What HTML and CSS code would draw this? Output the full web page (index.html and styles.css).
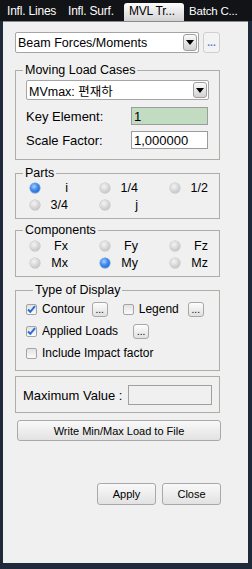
FILE: index.html
```html
<!DOCTYPE html>
<html lang="en">
<head>
  <meta charset="UTF-8" />
  <title>MVL Tracer</title>
  <link rel="stylesheet" href="styles.css">
</head>
<body>
  <div class="window">
    <!-- Tab strip -->
    <div class="tabs">
      <div class="tab lines">Infl. Lines</div>
      <div class="tab surf">Infl. Surf.</div>
      <div class="tab active">MVL Tr...</div>
      <div class="tab batch">Batch C...</div>
    </div>

    <div class="panel">
      <div class="top-row">
        <div class="combo combo-main">
          <span class="combo-text">Beam Forces/Moments</span>
          <span class="combo-btn"><svg width="8" height="5" viewBox="0 0 8 5"><path d="M0 0h8L4 5z" fill="#000"/></svg></span>
        </div>
        <button class="dots dots-blue">...</button>
      </div>

      <fieldset class="group moving">
        <legend>Moving Load Cases</legend>
        <div class="group-body">
          <div class="combo combo-case">
            <span class="combo-text">MVmax: 편재하</span>
            <span class="combo-btn"><svg width="8" height="5" viewBox="0 0 8 5"><path d="M0 0h8L4 5z" fill="#000"/></svg></span>
          </div>
          <div class="field-row">
            <label>Key Element:</label>
            <input class="edit key" type="text" value="1" />
          </div>
          <div class="field-row">
            <label>Scale Factor:</label>
            <input class="edit" type="text" value="1,000000" />
          </div>
        </div>
      </fieldset>

      <fieldset class="group parts">
        <legend>Parts</legend>
        <div class="radio-grid">
          <div class="radio-cell"><span class="radio on"></span><span class="radio-label">i</span></div>
          <div class="radio-cell"><span class="radio"></span><span class="radio-label">1/4</span></div>
          <div class="radio-cell"><span class="radio"></span><span class="radio-label">1/2</span></div>
          <div class="radio-cell"><span class="radio"></span><span class="radio-label">3/4</span></div>
          <div class="radio-cell"><span class="radio"></span><span class="radio-label">j</span></div>
        </div>
      </fieldset>

      <fieldset class="group components">
        <legend>Components</legend>
        <div class="radio-grid">
          <div class="radio-cell"><span class="radio"></span><span class="radio-label">Fx</span></div>
          <div class="radio-cell"><span class="radio"></span><span class="radio-label">Fy</span></div>
          <div class="radio-cell"><span class="radio"></span><span class="radio-label">Fz</span></div>
          <div class="radio-cell"><span class="radio"></span><span class="radio-label">Mx</span></div>
          <div class="radio-cell"><span class="radio on"></span><span class="radio-label">My</span></div>
          <div class="radio-cell"><span class="radio"></span><span class="radio-label">Mz</span></div>
        </div>
      </fieldset>

      <fieldset class="group display">
        <legend>Type of Display</legend>
        <div class="check-row">
          <span class="check on"><svg width="9" height="8" viewBox="0 0 9 8"><path d="M1 4.5l2.3 2.3L8 1.2" stroke="#2a6fd8" stroke-width="2" fill="none"/></svg></span>
          <span class="check-label contour">Contour</span>
          <button class="dots">...</button>
          <span class="check legend-check"></span>
          <span class="check-label legend-label">Legend</span>
          <button class="dots">...</button>
        </div>
        <div class="check-row">
          <span class="check on"><svg width="9" height="8" viewBox="0 0 9 8"><path d="M1 4.5l2.3 2.3L8 1.2" stroke="#2a6fd8" stroke-width="2" fill="none"/></svg></span>
          <span class="check-label applied">Applied Loads</span>
          <button class="dots">...</button>
        </div>
        <div class="check-row">
          <span class="check"></span>
          <span class="check-label">Include Impact factor</span>
        </div>
      </fieldset>

      <fieldset class="group maxval">
        <div class="max-row">
          <label>Maximum Value :</label>
          <input class="edit max-input" type="text" value="" />
        </div>
      </fieldset>

      <button class="push write">Write Min/Max Load to File</button>

      <div class="bottom-row">
        <button class="push apply">Apply</button>
        <button class="push close">Close</button>
      </div>
    </div>
  </div>
</body>
</html>
```

FILE: styles.css
```css
body {
  margin: 0;
  background: #1e2939;
  font-family: "Liberation Sans", Arial, "Noto Sans CJK KR", sans-serif;
  font-size: 12px;
  color: #000;
}

.window {
  width: 252px;
  height: 569px;
  display: flex;
  flex-direction: column;
}

/* tab strip */
.tabs {
  height: 21px;
  background: #111316;
  display: flex;
  align-items: flex-end;
  padding-left: 3px;
  color: #fff;
  font-size: 12px;
  letter-spacing: -0.2px;
  box-sizing: border-box;
}

.tab {
  flex: none;
  height: 18px;
  line-height: 17px;
  white-space: nowrap;
  box-sizing: border-box;
}

.tab.lines {
  width: 61px;
  padding-left: 4px;
}

.tab.surf {
  width: 57px;
  padding-left: 4px;
}

.tab.active {
  margin-left: 3px;
  width: 60px;
  padding-left: 5px;
  background: linear-gradient(#fefefe, #d2d2d2);
  color: #000;
  border-radius: 3px 3px 0 0;
}

.tab.batch {
  padding-left: 5px;
  font-size: 11.5px;
}

.panel {
  margin-left: 3px;
  width: 245px;
  height: 542px;
  background: #f0f0f0;
  border-top: 1px solid #8a8a8a;
  padding: 10px 0 0 12px;
  box-sizing: border-box;
}

/* combo boxes */
.top-row {
  display: flex;
  gap: 4px;
  height: 21px;
}

.combo {
  display: flex;
  align-items: center;
  justify-content: space-between;
  background: #fff;
  border: 1px solid #a5a5a5;
  border-radius: 2px;
  box-sizing: border-box;
  padding: 0 1px 0 2px;
}

.combo-main {
  width: 184px;
  height: 21px;
  font-size: 12.5px;
}

.combo-case {
  width: 183px;
  height: 20px;
  font-size: 12.5px;
}

.combo-text {
  white-space: nowrap;
}

.combo-btn {
  width: 14px;
  height: 17px;
  border: 1px solid #a0a0a0;
  border-radius: 3px;
  background: linear-gradient(#fafafa, #d2d2d2);
  display: flex;
  align-items: center;
  justify-content: center;
  box-sizing: border-box;
}

.combo-case .combo-btn {
  height: 16px;
}

.dots {
  width: 16px;
  height: 15px;
  padding: 0;
  border: 1px solid #a8a8a8;
  border-radius: 3px;
  background: linear-gradient(#fdfdfd, #e0e0e0);
  font-family: "Liberation Sans", Arial, sans-serif;
  font-size: 10px;
  line-height: 9px;
  color: #000;
}

.dots-blue {
  width: 17px;
  height: 21px;
  border-color: #cfcfcf;
  background: #f3f3f3;
  color: #5c7fd6;
  font-weight: bold;
}

/* group boxes */
.group {
  margin: 0;
  padding: 0;
  width: 205px;
  border: 1px solid #aeaea6;
  box-sizing: border-box;
  min-width: 0;
}

.group legend {
  margin-left: 7px;
  padding: 0 2px;
  line-height: 14px;
  font-size: 12.5px;
}

.moving {
  margin-top: 10px;
}

.group-body {
  padding: 3px 0 10px 10px;
}

.field-row {
  display: flex;
  align-items: center;
  margin-top: 7px;
  font-size: 13px;
}

.field-row + .field-row {
  margin-top: 6px;
}

.field-row label {
  width: 105px;
}

.edit {
  width: 77px;
  height: 18px;
  box-sizing: border-box;
  border: 1px solid #9c9c9c;
  padding: 0 2px;
  font-family: "Liberation Sans", Arial, sans-serif;
  font-size: 13px;
  background: #fff;
  outline: none;
}

.edit.key {
  background: #c2dcc2;
}

.parts {
  margin-top: 6px;
}

.components {
  margin-top: 4px;
}

.radio-grid {
  display: grid;
  grid-template-columns: 70px 70px 60px;
  grid-auto-rows: 17px;
  padding: 0 0 5px 14px;
  font-size: 12.5px;
}

.parts .radio-grid {
  margin-top: -1px;
}

.radio-cell {
  display: flex;
  align-items: center;
}

.radio {
  width: 10px;
  height: 10px;
  border-radius: 50%;
  background: radial-gradient(circle at 40% 35%, #f4f4f4 0, #d6d6d6 50%, #b4b4b4 100%);
  box-shadow: 0 0 0 0.5px #b8b8b8;
}

.radio.on {
  background: radial-gradient(circle at 40% 35%, #a8d0ff 0, #3a86ea 45%, #1d5fc8 100%);
  box-shadow: 0 0 0 0.5px #5a8ad0;
}

.radio-label {
  width: 28px;
  text-align: right;
}

/* type of display */
.display {
  margin-top: 6px;
  padding: 1px 0 6px 10px;
}

.check-row {
  display: flex;
  align-items: center;
  height: 22px;
}

.check {
  width: 11px;
  height: 11px;
  border: 1px solid #a4a4a4;
  border-radius: 2px;
  background: linear-gradient(#e2e2e2, #fbfbfb);
  display: flex;
  align-items: center;
  justify-content: center;
  box-sizing: border-box;
  flex: none;
}

.check-label {
  margin-left: 5px;
}

.contour {
  margin-right: 7px;
}

.legend-check {
  margin-left: 15px;
}

.legend-label {
  margin-right: 9px;
}

.applied {
  margin-right: 15px;
}

/* maximum value */
.maxval {
  margin-top: 5px;
  padding: 8px 0 7px 7px;
}

.max-row {
  display: flex;
  align-items: center;
  font-size: 13px;
}

.max-row label {
  width: 105px;
}

.max-input {
  width: 84px;
  height: 20px;
  background: #f0f0f0;
  border-color: #a0a0a0;
}

/* push buttons */
.push {
  height: 21px;
  border: 1px solid #a9a9a9;
  border-radius: 3px;
  background: linear-gradient(#f9f9f9, #e2e2e2);
  font-family: "Liberation Sans", Arial, sans-serif;
  font-size: 11px;
  color: #000;
  padding: 0;
}

.write {
  display: block;
  margin: 7px 0 0 2px;
  width: 204px;
}

.bottom-row {
  display: flex;
  justify-content: flex-end;
  gap: 6px;
  width: 206px;
  margin-top: 42px;
}

.apply, .close {
  width: 59px;
  height: 22px;
}
```
